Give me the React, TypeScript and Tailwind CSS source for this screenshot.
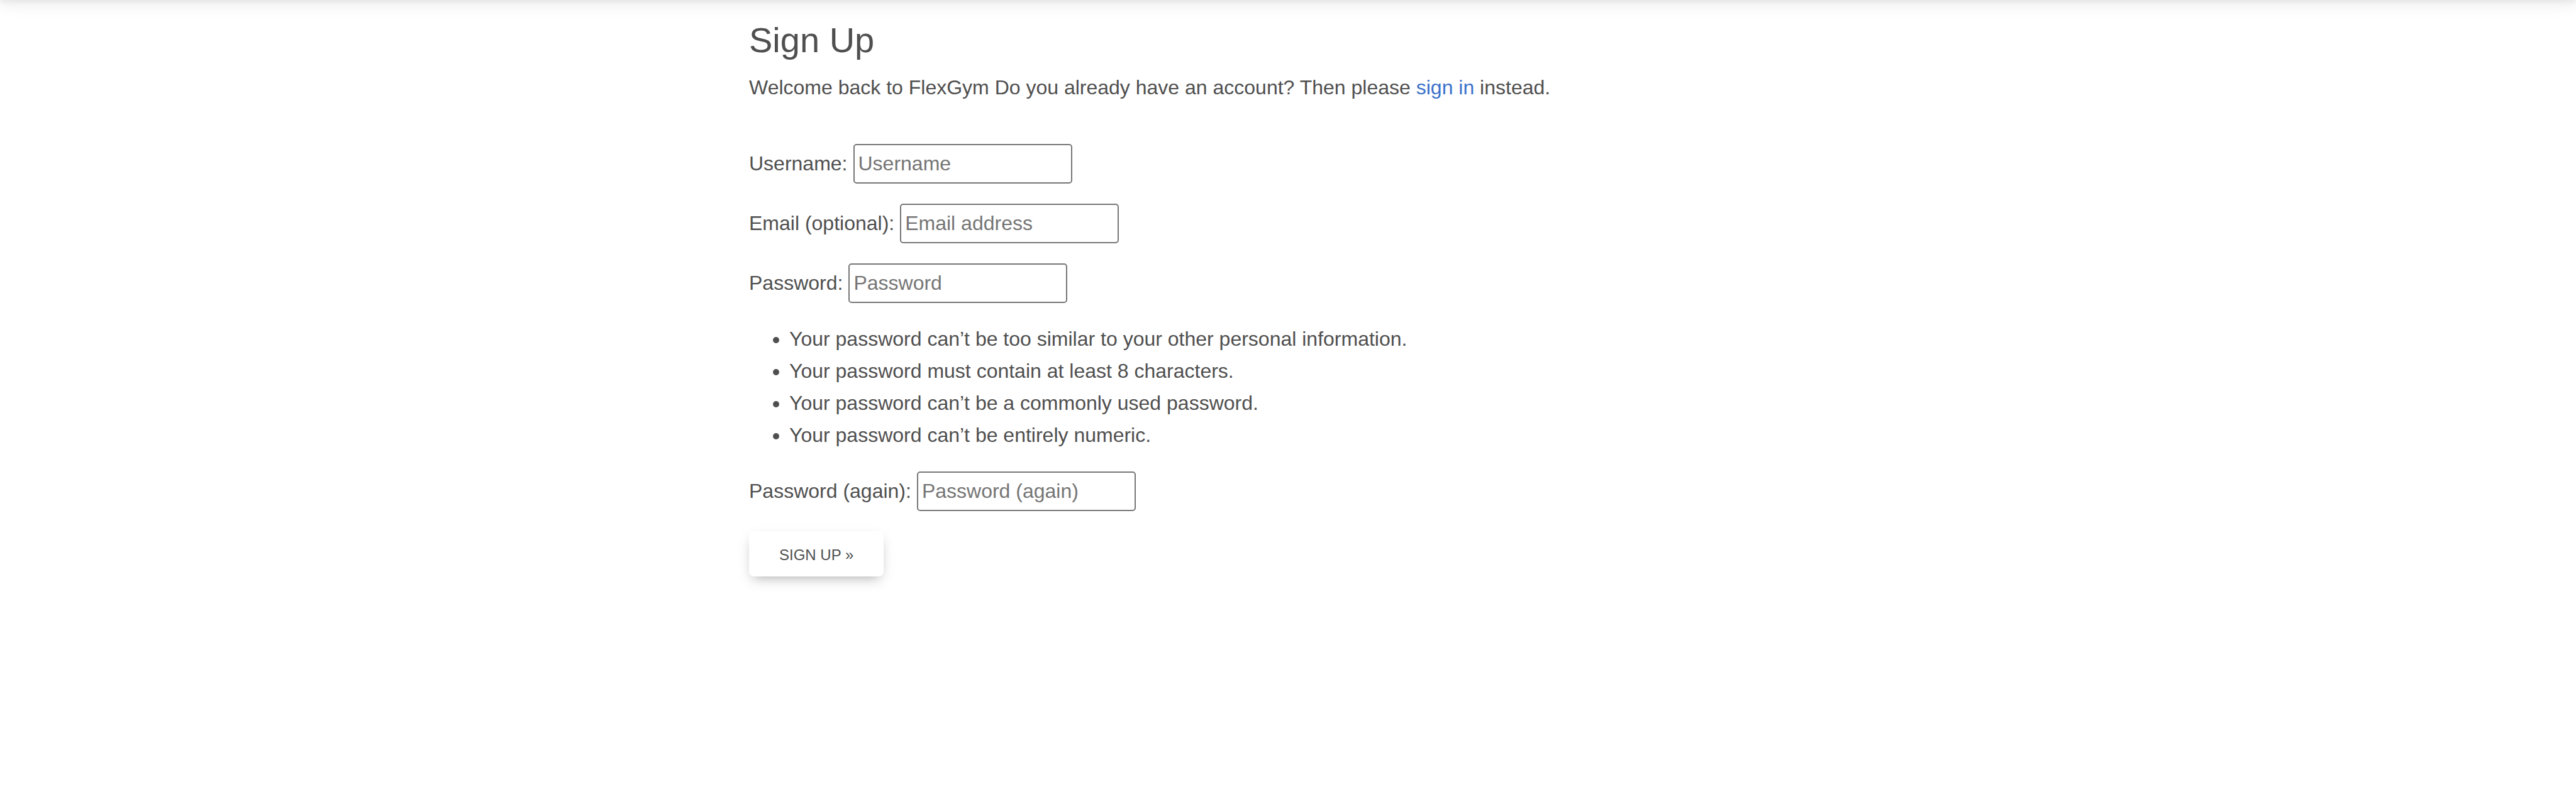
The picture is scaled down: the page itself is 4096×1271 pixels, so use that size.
import React from "react";

const fieldClass =
  "h-[63px] w-[348px] rounded-[5px] border-2 border-[#767676] bg-white px-[6px] text-[32px] text-[#4f4f4f] placeholder:text-[#757575] placeholder:opacity-100";

type FieldProps = { id: string; label: string; type: string; hint: string };

function Field({ id, label, type, hint }: FieldProps) {
  return (
    <div className="flex items-center gap-[9px]">
      <label htmlFor={id}>{label}</label>
      <input id={id} type={type} placeholder={hint} className={fieldClass} />
    </div>
  );
}

const rules = [
  "Your password can’t be too similar to your other personal information.",
  "Your password must contain at least 8 characters.",
  "Your password can’t be a commonly used password.",
  "Your password can’t be entirely numeric.",
];

export default function App() {
  return (
    <div className="flex min-h-screen flex-col bg-white font-['Liberation_Sans',Arial,sans-serif] text-[32px] leading-[51px] text-[#4f4f4f]">
      <header className="-mt-24 h-24 shrink-0 shadow-[0_8px_24px_0_rgba(0,0,0,0.07),0_4px_8px_rgba(0,0,0,0.05)]" />
      <main className="mx-auto w-full max-w-[1714px] pt-[30px]">
        <h1 className="text-[56px] leading-[68px]">Sign Up</h1>
        <p className="mt-4">
          Welcome back to FlexGym Do you already have an account? Then please{" "}
          <a href="#signin" className="text-[#3b71ca]">sign in</a> instead.
        </p>
        <form className="mt-16 flex flex-col items-start gap-8">
          <Field id="username" label="Username:" type="text" hint="Username" />
          <Field id="email" label="Email (optional):" type="email" hint="Email address" />
          <Field id="password" label="Password:" type="password" hint="Password" />
          <ul className="list-disc pl-16">
            {rules.map((rule) => <li key={rule}>{rule}</li>)}
          </ul>
          <Field id="again" label="Password (again):" type="password" hint="Password (again)" />
          <button type="button" className="h-[72px] rounded-lg px-12 pt-1 text-[24px] leading-[36px] shadow-[0_8px_18px_-8px_rgba(0,0,0,0.3),0_8px_24px_0_rgba(0,0,0,0.07)]">SIGN UP »</button>
        </form>
      </main>
    </div>
  );
}
